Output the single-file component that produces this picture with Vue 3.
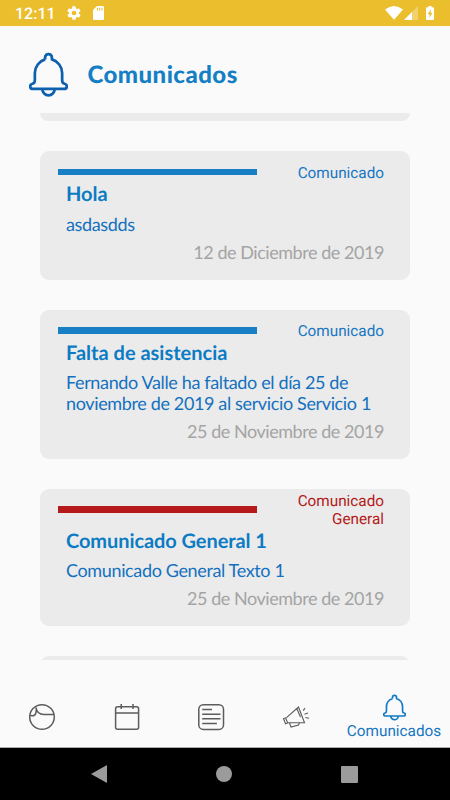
<script setup>
const cards = [
  { label: ['Comunicado'], title: 'Hola', text: ['asdasdds'], date: '12 de Diciembre de 2019', general: false },
  {
    label: ['Comunicado'],
    title: 'Falta de asistencia',
    text: ['Fernando Valle ha faltado el día 25 de', 'noviembre de 2019 al servicio Servicio 1'],
    date: '25 de Noviembre de 2019',
    general: false,
  },
  { label: ['Comunicado', 'General'], title: 'Comunicado General 1', text: ['Comunicado General Texto 1'], date: '25 de Noviembre de 2019', general: true },
]
</script>

<template>
  <div class="screen">
    <div class="status">
      <span class="clock">12:11</span>
      <svg class="gear" viewBox="0 0 24 24" width="16" height="16">
        <path fill="#fff" fill-rule="evenodd" d="M19.4 13c.1-.3.1-.7.1-1s0-.7-.1-1l2.1-1.600c.2-.2.300-.4.100-.7l-2-3.400c-.1-.2-.4-.3-.6-.2l-2.500 1a7 7 0 0 0-1.700-1l-.4-2.600c0-.3-.2-.5-.5-.5h-4c-.3 0-.5.2-.5.500l-.4 2.600a7 7 0 0 0-1.700 1l-2.500-1c-.2-.1-.5 0-.6.200l-2 3.400c-.1.300-.1.500.1.700L4.500 11c0 .3-.1.700-.1 1s0 .7.100 1l-2.100 1.600c-.2.200-.2.400-.1.700l2 3.400c.1.200.4.300.6.200l2.500-1a7 7 0 0 0 1.700 1l.4 2.600c0 .3.200.5.500.5h4c.3 0 .5-.2.500-.5l.4-2.600a7 7 0 0 0 1.700-1l2.500 1c.2.100.5 0 .6-.2l2-3.400c.1-.3.100-.5-.1-.7zM12 15.500a3.500 3.500 0 1 1 0-7 3.500 3.500 0 0 1 0 7z" />
      </svg>
      <svg class="sd" viewBox="0 0 11 14" width="11" height="14">
        <path fill="#fff" d="M4 0h5.700Q11 0 11 1.300v11.400Q11 14 9.700 14H1.300Q0 14 0 12.700V4z" />
        <path stroke="#ebbe2d" stroke-width="1" d="M4.500 1.700v2.800M6.700 1.700v2.800M8.900 1.700v2.800" />
      </svg>
      <span class="grow"></span>
      <svg viewBox="0 0 18 14" width="18" height="14"><path fill="#fff" d="M0 3.600Q9-3.600 18 3.600L9 13.800z" /></svg>
      <svg class="signal" viewBox="0 0 14 14" width="14" height="14">
        <path fill="#fff" opacity=".3" d="M14 0v14H0z" />
        <path fill="#fff" d="M8 6v8H0z" />
      </svg>
      <svg class="battery" viewBox="0 0 8 14" width="8" height="14">
        <path fill="#fff" d="M2.500 0h3v1.300H7q1 0 1 1V13q0 1-1 1H1q-1 0-1-1V2.300q0-1 1-1h1.500z" />
        <path fill="#ebbe2d" d="M4.700 3.500 1.800 8.300h1.800v3.500l2.700-4.900H4.700z" />
      </svg>
    </div>

    <header class="header">
      <svg class="head-bell" viewBox="0 0 40 46" width="39" height="45">
        <path class="bell" d="M16.500 7.500V5.500a3.500 3.500 0 0 1 7 0v2c6 1.700 10.500 7.500 10.500 14V29c0 2.500 1 3.200 2.500 3.500 3.200.7 3 5.300-.5 5.300H4c-3.500 0-3.700-4.600-.5-5.300C5 32.200 6 31.500 6 29v-7.500c0-6.500 4.500-12.300 10.500-14M13.700 38a6.300 6.300 0 0 0 12.600 0" />
      </svg>
      <h1>Comunicados</h1>
    </header>

    <main class="list">
      <div class="edge top"></div>
      <article v-for="card in cards" :key="card.title" class="card" :class="{ general: card.general }">
        <div class="card-head">
          <span class="bar"></span>
          <div class="label"><div v-for="l in card.label" :key="l">{{ l }}</div></div>
        </div>
        <h2>{{ card.title }}</h2>
        <div class="text"><div v-for="t in card.text" :key="t">{{ t }}</div></div>
        <div class="date">{{ card.date }}</div>
      </article>
      <div class="edge bottom"></div>
    </main>

    <nav class="tabs">
      <div class="tab">
        <svg viewBox="0 0 28 28" width="28" height="28">
          <circle cx="14" cy="14" r="12.300" />
          <path d="M8.200 4.500c-.3 4 3.300 7 7.800 7h10M8.200 4.500c.4 4-.2 8.300-3.700 8.300l-2.700-.3" />
        </svg>
      </div>
      <div class="tab">
        <svg viewBox="0 0 28 28" width="28" height="28">
          <rect x="2.600" y="3.700" width="23" height="22.600" rx="2" />
          <path d="M2.600 10h23M8.200 1v5M20 1v5" />
        </svg>
      </div>
      <div class="tab">
        <svg viewBox="0 0 28 28" width="28" height="28">
          <rect x="1.800" y="1.700" width="24.700" height="24.700" rx="4.500" />
          <path d="M5.200 6.600H15M5.200 11.200h18.300M5.200 15.800h18.300M5.200 20.400h14.700" />
        </svg>
      </div>
      <div class="tab">
        <svg class="horn" viewBox="0 0 28 28" width="28" height="28">
          <path d="M4.500 14.700 16.500 4l6 15.700H5.200M4.500 14.700l-3 .8 2 5.300 2.200-.8-2.200-5.300M14.800 5.500 18.500 14M7.500 20l1.500 4 7.500-2 1-2.300M21.200 7.600l1.800-2.400M22.500 11.200l3.500-1.200M23.300 14.500l3.700.7" />
        </svg>
      </div>
      <div class="tab active">
        <svg viewBox="0 0 40 46" width="23" height="27">
          <path class="bell small" d="M16.500 7.500V5.500a3.500 3.500 0 0 1 7 0v2c6 1.700 10.500 7.500 10.500 14V29c0 2.500 1 3.200 2.500 3.500 3.200.7 3 5.300-.5 5.300H4c-3.500 0-3.700-4.600-.5-5.300C5 32.200 6 31.500 6 29v-7.500c0-6.500 4.500-12.300 10.500-14M13.700 38a6.300 6.300 0 0 0 12.600 0" />
        </svg>
        <span>Comunicados</span>
      </div>
    </nav>

    <div class="system">
      <svg viewBox="0 0 16 18" width="16" height="18"><path fill="#9b9b9b" d="M16 0v18L0 9z" /></svg>
      <span class="home"></span>
      <span class="recent"></span>
    </div>
  </div>
</template>

<style>
body { margin: 0; }
</style>

<style scoped>
.screen {
  width: 450px;
  height: 800px;
  overflow: hidden;
  display: flex;
  flex-direction: column;
  background: #fafafa;
  font-family: Lato, sans-serif;
  text-rendering: geometricPrecision;
}
svg { display: block; flex: none; }
.status {
  height: 26px;
  flex: none;
  display: flex;
  align-items: center;
  background: #ebbe2d;
  padding: 0 16px 0 15px;
  box-sizing: border-box;
}
.clock { font: 500 16px/26px Roboto, sans-serif; color: #fff; width: 51px; padding-top: 2px; }
.sd { margin-left: 10.500px; }
.grow { flex: 1; }
.signal { margin-left: 1px; }
.battery { margin-left: 8px; }
.header { height: 87px; flex: none; display: flex; padding: 25px 0 0 28.500px; box-sizing: border-box; }
.head-bell { margin-top: 1px; }
.bell { fill: none; stroke: #0d60ae; stroke-width: 2.8; stroke-linejoin: round; }
.bell.small { stroke: #117ac3; stroke-width: 2.900; }
h1 { margin: 9px 0 0 20px; font-size: 24px; line-height: 30px; font-weight: 900; letter-spacing: .46px; color: #147fc4; }
.list { height: 547px; flex: none; overflow: hidden; padding: 0 40px; }
.edge { background: #ebebeb; }
.edge.top { height: 8px; border-radius: 0 0 9px 9px; margin-bottom: 30.300px; }
.edge.bottom { height: 40px; border-radius: 9px; }
.card {
  background: #ebebeb;
  border-radius: 9px;
  margin-bottom: 30px;
  padding: 12.700px 26px 17px;
}
.card.general { padding-top: 3.500px; }
.card-head { display: flex; align-items: center; justify-content: space-between; margin-left: -8.400px; }
.bar { width: 199px; height: 6.400px; background: #197fc5; margin-bottom: 1.600px; }
.label { font: 15.300px/18px Roboto, sans-serif; color: #1777c2; text-align: right; }
.general .bar { background: #b51919; }
.general .label { color: #b51919; }
h2 { margin: .3px 0 0; font-size: 20px; line-height: 24px; font-weight: 700; color: #0b7bc4; }
.general h2 { letter-spacing: -.08px; }
.text { margin-top: 7.300px; font-size: 18px; line-height: 21px; letter-spacing: -.36px; color: #1471c0; white-space: nowrap; }
.date { margin-top: 7px; font-size: 18px; line-height: 21px; letter-spacing: -.45px; color: #a4a4a4; text-align: right; }
.general .date { margin-bottom: .5px; }
.tabs { height: 87px; flex: none; display: flex; }
.tab { width: 84.500px; display: flex; justify-content: center; padding-top: 43px; box-sizing: border-box; }
.tab svg { fill: none; stroke: #5c5c5c; stroke-width: 1.500; }
.tab .horn { stroke-width: 1.100; }
.tab.active { width: 112px; flex-direction: column; justify-content: flex-start; align-items: center; padding-top: 34px; }
.active span { font: 15.300px/20px Roboto, sans-serif; color: #1777c2; }
.system {
  height: 53px;
  flex: none;
  background: #000;
  border-top: 1px solid #aaa;
  box-sizing: border-box;
  display: flex;
  align-items: center;
  padding: 0 92.500px 0 91px;
  justify-content: space-between;
}
.home { width: 16px; height: 16px; border-radius: 50%; background: #9b9b9b; }
.recent { width: 17px; height: 17px; border-radius: 1px; background: #9b9b9b; }
</style>
